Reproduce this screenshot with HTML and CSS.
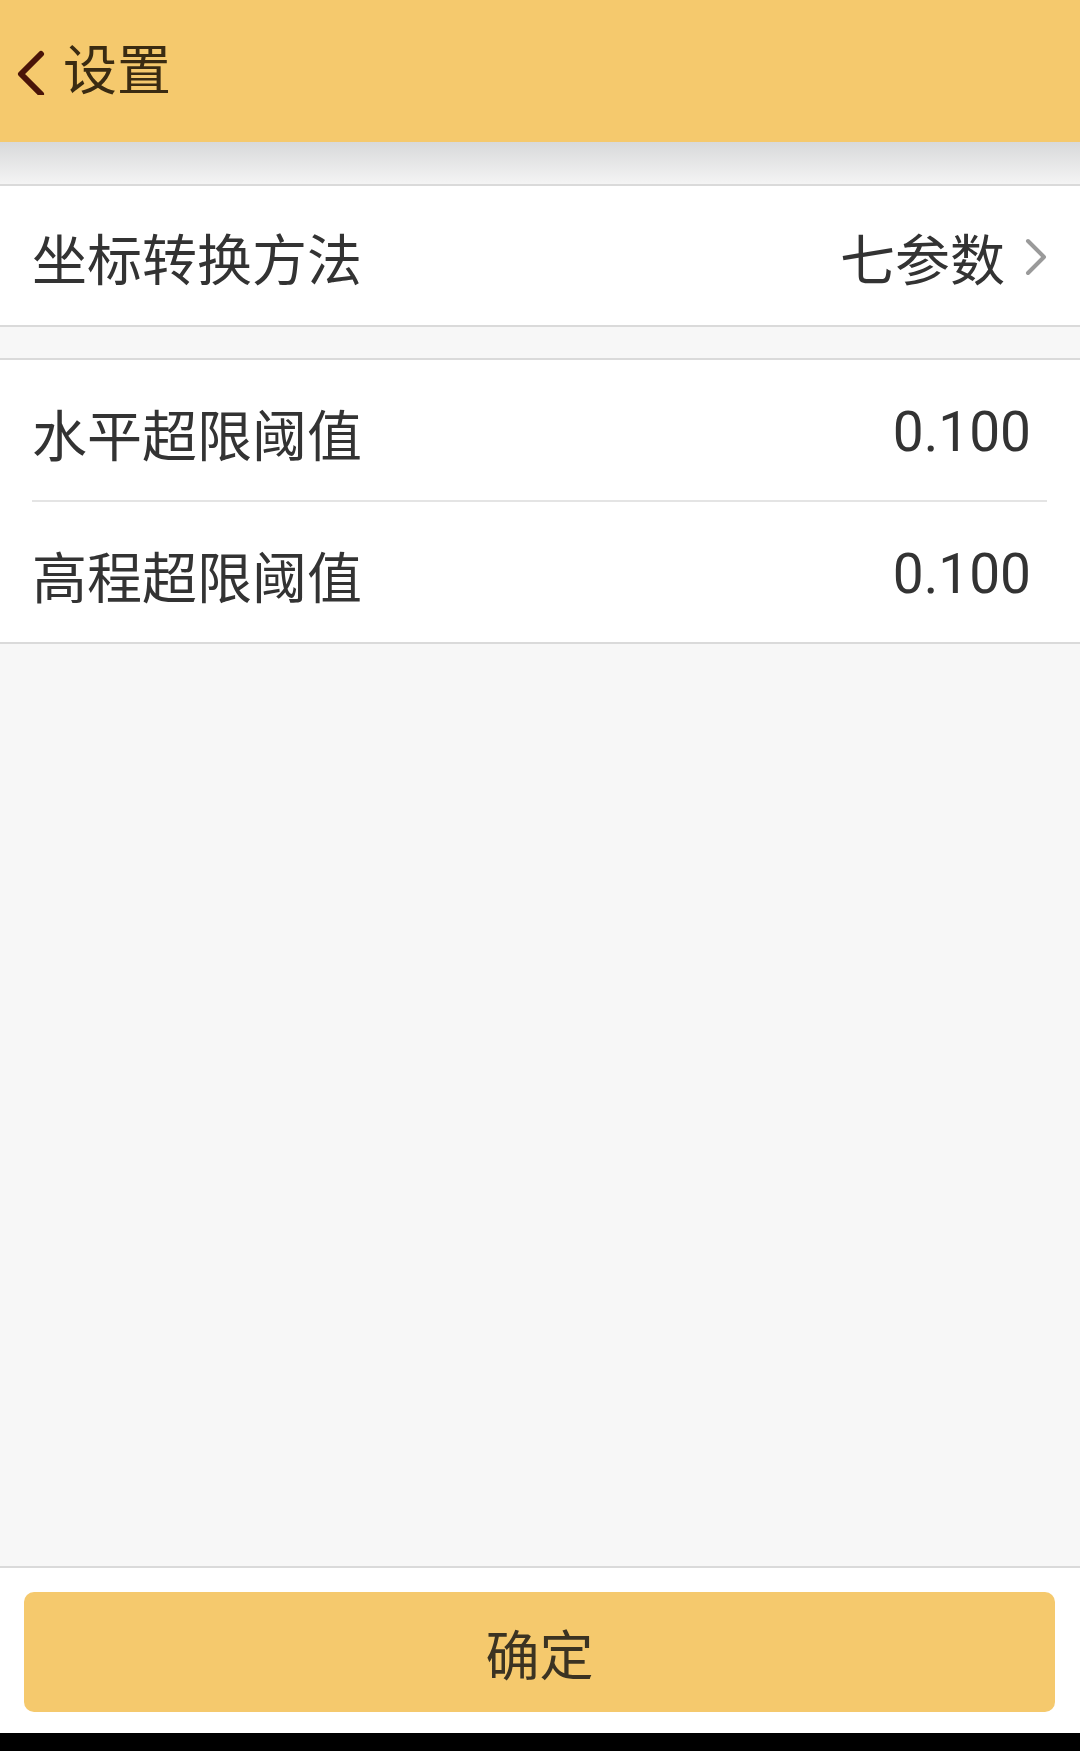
FILE: index.html
```html
<!DOCTYPE html>
<html lang="zh-CN">
<head>
    <meta charset="UTF-8">
    <meta name="viewport" content="width=device-width, initial-scale=1.0">
    <title>设置</title>
    <link rel="stylesheet" href="styles.css">
</head>
<body>

    <div class="page">
        <header class="topbar">
            <svg class="back" width="30" height="50" viewBox="0 0 30 50">
                <polyline points="24,9 4,29 24,49" fill="none" stroke="#4a1408" stroke-width="6" stroke-linecap="round" stroke-linejoin="round"/>
            </svg>
            <span class="title">设置</span>
        </header>
        <div class="shade"></div>

        <!-- Conversion method -->
        <div class="group">
            <div class="row row-link">
                <span class="label">坐标转换方法</span>
                <span class="value">七参数</span>
                <svg class="arrow" width="22" height="38" viewBox="0 0 22 38">
                    <polyline points="3,3 19,19 3,35" fill="none" stroke="#9a9a9a" stroke-width="4" stroke-linecap="round" stroke-linejoin="round"/>
                </svg>
            </div>
        </div>

        <!-- Thresholds -->
        <div class="group">
            <div class="row">
                <span class="label">水平超限阈值</span>
                <span class="value">0.100</span>
            </div>
            <div class="divider"></div>
            <div class="row">
                <span class="label">高程超限阈值</span>
                <span class="value">0.100</span>
            </div>
        </div>

        <div class="spacer"></div>

        <footer class="footer">
            <button class="confirm">确定</button>
        </footer>
        <div class="navbar"></div>
    </div>

</body>
</html>
```

FILE: styles.css
```css
body {
    margin: 0;
    font-family: Roboto, "Noto Sans CJK SC", sans-serif;
    background: #f7f7f7;
    color: #333;
}

.page {
    display: flex;
    flex-direction: column;
    height: 1751px;
}

/* Top bar */
.topbar {
    height: 142px;
    background: #f5c96d;
    display: flex;
    align-items: center;
    padding-left: 17px;
    flex-shrink: 0;
}

.back {
    margin-top: -2px;
}

.title {
    margin-left: 16px;
    font-size: 54px;
    color: #3a2b12;
    line-height: 1;
    margin-top: 2px;
}

.shade {
    height: 42px;
    background: linear-gradient(#d8d9da, #f4f4f4);
    flex-shrink: 0;
}

/* List groups */
.group {
    background: #fff;
    border-top: 2px solid #dadada;
    border-bottom: 2px solid #dadada;
    flex-shrink: 0;
}

.group + .group {
    margin-top: 31px;
}

.row {
    height: 140px;
    box-sizing: border-box;
    display: flex;
    align-items: center;
    padding: 4px 49px 0 32px;
    font-size: 55px;
}

.row-link {
    height: 139px;
    padding-top: 0;
    padding-right: 33px;
}

.label {
    flex: 1;
}

.value {
    color: #333;
}

.arrow {
    margin-left: 20px;
    margin-top: 2px;
}

.divider {
    height: 2px;
    margin: 0 33px 0 32px;
    background: #e4e4e4;
}

.spacer {
    flex: 1;
}

/* Confirm button */
.footer {
    background: #fff;
    border-top: 2px solid #dadada;
    padding: 24px 25px 21px 24px;
    flex-shrink: 0;
}

.confirm {
    display: block;
    width: 100%;
    height: 120px;
    border: none;
    border-radius: 10px;
    background: #f5c96d;
    color: #3b3322;
    font-family: "Noto Sans CJK SC", sans-serif;
    font-size: 54px;
    padding: 0;
}

.navbar {
    height: 18px;
    background: #000;
    flex-shrink: 0;
}
```
